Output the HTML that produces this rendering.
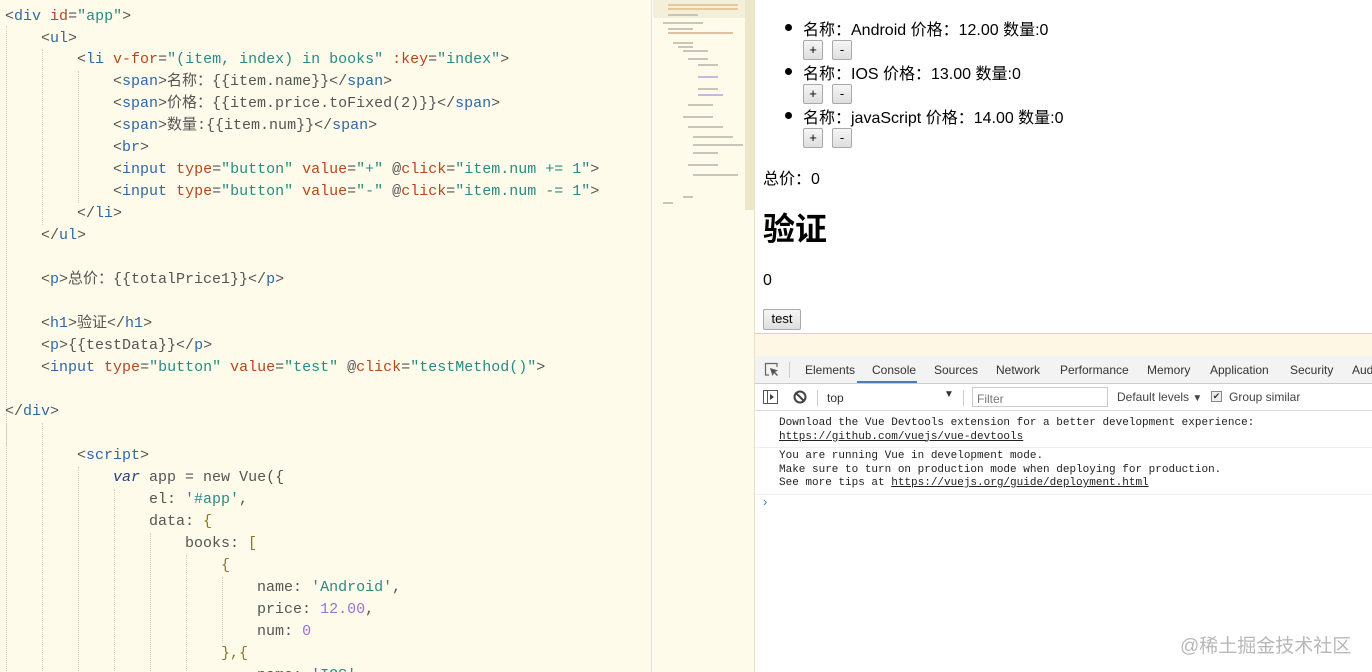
<!DOCTYPE html>
<html><head><meta charset="utf-8">
<style>
*{margin:0;padding:0;box-sizing:border-box}
body{width:1372px;height:672px;overflow:hidden;position:relative;background:#fff;font-family:"Liberation Sans","Noto Sans CJK SC",sans-serif}
#ed{position:absolute;left:0;top:0;width:652px;height:672px;background:#fefbea;border-right:1px solid #e8e2c4;overflow:hidden}
.g{position:absolute;top:0;width:0;border-left:1px dotted #d4d0bc}
.l{position:absolute;left:5px;height:22px;line-height:22px;white-space:pre;font-family:"Liberation Mono","Noto Sans CJK SC",monospace;font-size:15px;color:#555;letter-spacing:0}
.t{color:#2f68a6}.a{color:#b5461e}.s{color:#2a8a84}.n{color:#9a72d4}.k{color:#2c3f78;font-style:italic}.y{color:#8a7a20}
#mm{position:absolute;left:653px;top:0;width:102px;height:672px;background:#fefbea;border-right:1px solid #e8e2c4}
#mm i{position:absolute;height:2px;background:#c8c6b8;display:block}
#pv{position:absolute;left:755px;top:0;width:617px;height:333px;background:#fff;font-size:16px;color:#000}
.li{position:absolute;left:48px;white-space:nowrap}
.dot{position:absolute;left:30px;width:7px;height:7px;border-radius:4px;background:#000}
.btn{position:absolute;height:20px;border:1px solid #a9a9a9;background:linear-gradient(#f6f6f6,#dedede);font-size:13px;text-align:center;line-height:17px;border-radius:2px}
#dt{position:absolute;left:755px;top:333px;width:617px;height:339px;background:#fff;border-top:1px solid #ddd6a8}
#strip{position:absolute;left:0;top:0;width:617px;height:22px;background:#fdf7e3}
#tabs{position:absolute;left:0;top:22px;width:617px;height:28px;background:#f3f3f3;border-bottom:1px solid #ccc;font-size:12px;color:#333}
#tabs span{position:absolute;top:7px}
#tb{position:absolute;left:0;top:50px;width:617px;height:27px;border-bottom:1px solid #ddd;font-size:12px;color:#333}
.msg{position:absolute;left:24px;font-family:"Liberation Mono",monospace;font-size:11px;line-height:13.5px;color:#222;white-space:pre}
.msg u{color:#222}
</style></head><body>
<div id="ed">
<div class="g" style="left:6px;height:420px;top:26px"></div>
<div class="g" style="left:42px;top:49px;height:176px"></div>
<div class="g" style="left:78px;top:71px;height:132px"></div>
<div class="g" style="left:6px;top:423px;height:250px"></div>
<div class="g" style="left:42px;top:423px;height:250px"></div>
<div class="g" style="left:78px;top:467px;height:206px"></div>
<div class="g" style="left:114px;top:489px;height:184px"></div>
<div class="g" style="left:150px;top:533px;height:140px"></div>
<div class="g" style="left:186px;top:555px;height:118px"></div>
<div class="g" style="left:222px;top:577px;height:66px"></div>
<div class="l" style="top:6px">&lt;<span class="t">div</span> <span class="a">id</span>=<span class="s">"app"</span>&gt;</div>
<div class="l" style="top:28px">    &lt;<span class="t">ul</span>&gt;</div>
<div class="l" style="top:49px">        &lt;<span class="t">li</span> <span class="a">v-for</span>=<span class="s">"(item, index) in books"</span> <span class="a">:key</span>=<span class="s">"index"</span>&gt;</div>
<div class="l" style="top:71px">            &lt;<span class="t">span</span>&gt;名称：{{item.name}}&lt;/<span class="t">span</span>&gt;</div>
<div class="l" style="top:93px">            &lt;<span class="t">span</span>&gt;价格：{{item.price.toFixed(2)}}&lt;/<span class="t">span</span>&gt;</div>
<div class="l" style="top:115px">            &lt;<span class="t">span</span>&gt;数量:{{item.num}}&lt;/<span class="t">span</span>&gt;</div>
<div class="l" style="top:137px">            &lt;<span class="t">br</span>&gt;</div>
<div class="l" style="top:159px">            &lt;<span class="t">input</span> <span class="a">type</span>=<span class="s">"button"</span> <span class="a">value</span>=<span class="s">"+"</span> @<span class="a">click</span>=<span class="s">"item.num += 1"</span>&gt;</div>
<div class="l" style="top:181px">            &lt;<span class="t">input</span> <span class="a">type</span>=<span class="s">"button"</span> <span class="a">value</span>=<span class="s">"-"</span> @<span class="a">click</span>=<span class="s">"item.num -= 1"</span>&gt;</div>
<div class="l" style="top:203px">        &lt;/<span class="t">li</span>&gt;</div>
<div class="l" style="top:225px">    &lt;/<span class="t">ul</span>&gt;</div>
<div class="l" style="top:269px">    &lt;<span class="t">p</span>&gt;总价：{{totalPrice1}}&lt;/<span class="t">p</span>&gt;</div>
<div class="l" style="top:313px">    &lt;<span class="t">h1</span>&gt;验证&lt;/<span class="t">h1</span>&gt;</div>
<div class="l" style="top:335px">    &lt;<span class="t">p</span>&gt;{{testData}}&lt;/<span class="t">p</span>&gt;</div>
<div class="l" style="top:357px">    &lt;<span class="t">input</span> <span class="a">type</span>=<span class="s">"button"</span> <span class="a">value</span>=<span class="s">"test"</span> @<span class="a">click</span>=<span class="s">"testMethod()"</span>&gt;</div>
<div class="l" style="top:401px">&lt;/<span class="t">div</span>&gt;</div>
<div class="l" style="top:445px">        &lt;<span class="t">script</span>&gt;</div>
<div class="l" style="top:467px">            <span class="k">var</span> app = new Vue({</div>
<div class="l" style="top:489px">                el: <span class="s">'#app'</span>,</div>
<div class="l" style="top:511px">                data: <span class="y">{</span></div>
<div class="l" style="top:533px">                    books: <span class="y">[</span></div>
<div class="l" style="top:555px">                        <span class="y">{</span></div>
<div class="l" style="top:577px">                            name: <span class="s">'Android'</span>,</div>
<div class="l" style="top:599px">                            price: <span class="n">12.00</span>,</div>
<div class="l" style="top:621px">                            num: <span class="n">0</span></div>
<div class="l" style="top:643px">                        <span class="y">},{</span></div>
<div class="l" style="top:665px">                            name: <span class="s">'IOS'</span>,</div>
</div>
<div id="mm">
<div style="position:absolute;left:0;top:0;width:92px;height:18px;background:#f3efd8"></div>
<i style="left:15px;top:4px;width:70px;background:#e8c89a"></i>
<i style="left:15px;top:8px;width:70px;background:#e8c89a"></i>
<i style="left:15px;top:14px;width:30px"></i>
<i style="left:10px;top:22px;width:40px"></i>
<i style="left:15px;top:28px;width:25px"></i>
<i style="left:15px;top:32px;width:65px;background:#e0c0a0"></i>
<i style="left:20px;top:42px;width:20px"></i>
<i style="left:25px;top:46px;width:15px"></i>
<i style="left:30px;top:50px;width:25px"></i>
<i style="left:35px;top:58px;width:20px"></i>
<i style="left:45px;top:64px;width:20px"></i>
<i style="left:45px;top:76px;width:20px;background:#c8b8e0"></i>
<i style="left:45px;top:88px;width:20px"></i>
<i style="left:45px;top:94px;width:25px;background:#c8b8e0"></i>
<i style="left:35px;top:104px;width:25px"></i>
<i style="left:30px;top:116px;width:30px"></i>
<i style="left:35px;top:126px;width:35px"></i>
<i style="left:40px;top:136px;width:40px"></i>
<i style="left:40px;top:144px;width:50px"></i>
<i style="left:40px;top:152px;width:25px"></i>
<i style="left:35px;top:164px;width:30px"></i>
<i style="left:40px;top:174px;width:45px"></i>
<i style="left:30px;top:196px;width:10px"></i>
<i style="left:10px;top:202px;width:10px"></i>
<div style="position:absolute;left:92px;top:0;width:10px;height:210px;background:#ede7c9"></div>
</div>
<div id="pv">
<div class="dot" style="top:24px"></div><div class="li" style="top:16px">名称：Android 价格：12.00 数量:0</div>
<div class="btn" style="left:48px;top:40px;width:20px">+</div><div class="btn" style="left:77px;top:40px;width:20px">-</div>
<div class="dot" style="top:68px"></div><div class="li" style="top:60px">名称：IOS 价格：13.00 数量:0</div>
<div class="btn" style="left:48px;top:84px;width:20px">+</div><div class="btn" style="left:77px;top:84px;width:20px">-</div>
<div class="dot" style="top:112px"></div><div class="li" style="top:104px">名称：javaScript 价格：14.00 数量:0</div>
<div class="btn" style="left:48px;top:128px;width:20px">+</div><div class="btn" style="left:77px;top:128px;width:20px">-</div>
<div style="position:absolute;left:8px;top:165px">总价：0</div>
<div style="position:absolute;left:8px;top:207px;font-size:32px;font-weight:bold;line-height:44px">验证</div>
<div style="position:absolute;left:8px;top:272px">0</div>
<div class="btn" style="left:8px;top:309px;width:38px;height:21px;font-size:13px;line-height:18px">test</div>
</div>
<div id="dt">
<div id="strip"></div>
<div id="tabs">
<svg style="position:absolute;left:9px;top:6px" width="15" height="15" viewBox="0 0 15 15"><path d="M5 13H1.5V1.5H13V5" fill="none" stroke="#666" stroke-width="1.2"/><path d="M6 6l2.5 8 1.5-3 3 3 1-1-3-3 3-1.5z" fill="#555"/></svg>
<div style="position:absolute;left:34px;top:6px;width:1px;height:16px;background:#ccc"></div>
<span style="left:50px">Elements</span>
<span style="left:117px">Console</span>
<div style="position:absolute;left:102px;top:25px;width:60px;height:2px;background:#4d7bb5"></div>
<span style="left:179px">Sources</span>
<span style="left:241px">Network</span>
<span style="left:305px">Performance</span>
<span style="left:392px">Memory</span>
<span style="left:455px">Application</span>
<span style="left:535px">Security</span>
<span style="left:597px">Aud</span>
</div>
<div id="tb">
<svg style="position:absolute;left:8px;top:6px" width="15" height="14" viewBox="0 0 15 14"><rect x="0.5" y="0.5" width="14" height="13" fill="none" stroke="#555"/><line x1="4.5" y1="1" x2="4.5" y2="13" stroke="#555"/><path d="M7 4l4 3-4 3z" fill="#444"/></svg>
<svg style="position:absolute;left:38px;top:6px" width="14" height="14" viewBox="0 0 14 14"><circle cx="7" cy="7" r="5.5" fill="none" stroke="#444" stroke-width="2"/><line x1="3" y1="3" x2="11" y2="11" stroke="#444" stroke-width="2"/></svg>
<div style="position:absolute;left:62px;top:6px;width:1px;height:16px;background:#ccc"></div>
<span style="position:absolute;left:72px;top:7px">top</span>
<span style="position:absolute;left:189px;top:5px;font-size:10px">▼</span>
<div style="position:absolute;left:208px;top:6px;width:1px;height:16px;background:#ccc"></div>
<div style="position:absolute;left:217px;top:3px;width:136px;height:20px;border:1px solid #ccc;padding:4px 0 0 4px;color:#777">Filter</div>
<span style="position:absolute;left:362px;top:6px;color:#444">Default levels <span style="font-size:10px">▼</span></span>
<div style="position:absolute;left:456px;top:7px;width:11px;height:11px;border:1px solid #888;background:#eee;font-size:9px;line-height:9px;text-align:center">✔</div>
<span style="position:absolute;left:474px;top:6px;color:#444">Group similar</span>
</div>
<div class="msg" style="top:83px">Download the Vue Devtools extension for a better development experience:
<u>https://github.com/vuejs/vue-devtools</u></div>
<div style="position:absolute;left:0;top:113px;width:617px;height:1px;background:#eee"></div>
<div class="msg" style="top:116px">You are running Vue in development mode.
Make sure to turn on production mode when deploying for production.
See more tips at <u>https://vuejs.org/guide/deployment.html</u></div>
<div style="position:absolute;left:0;top:160px;width:617px;height:1px;background:#eee"></div>
<div style="position:absolute;left:8px;top:160px;color:#3b7ad0;font-size:13px">›</div>
<div style="position:absolute;left:425px;top:297px;font-size:19px;color:#b8b8b8">@稀土掘金技术社区</div>
</div>
</body></html>
